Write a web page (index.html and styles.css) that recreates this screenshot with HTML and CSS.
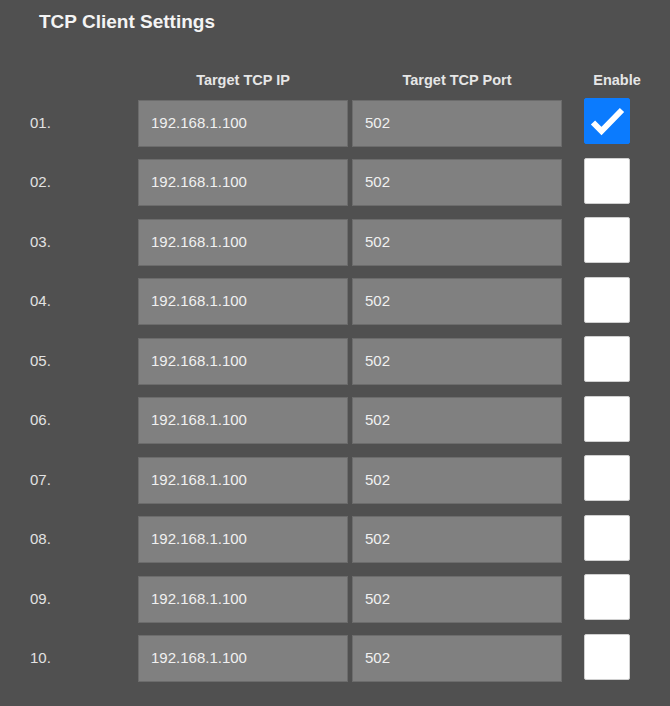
FILE: index.html
```html
<!DOCTYPE html>
<html>
<head>
<meta charset="utf-8">
<link rel="stylesheet" href="styles.css">
</head>
<body>
<div class="panel">
  <h1 class="title">TCP Client Settings</h1>
  <div class="grid">
    <div class="head"></div>
    <div class="head head-ip">Target TCP IP</div>
    <div class="head head-port">Target TCP Port</div>
    <div class="head head-enable">Enable</div>

    <div class="label">01.</div><div class="field field-ip">192.168.1.100</div><div class="field field-port">502</div><div class="cell-check"><span class="check checked"><svg viewBox="0 0 46 46" width="46" height="46"><path d="M9 24.5 L17.5 33 L38 12" fill="none" stroke="#fff" stroke-width="6" stroke-linecap="butt" stroke-linejoin="miter"/></svg></span></div>
    <div class="label">02.</div><div class="field field-ip">192.168.1.100</div><div class="field field-port">502</div><div class="cell-check"><span class="check"></span></div>
    <div class="label">03.</div><div class="field field-ip">192.168.1.100</div><div class="field field-port">502</div><div class="cell-check"><span class="check"></span></div>
    <div class="label">04.</div><div class="field field-ip">192.168.1.100</div><div class="field field-port">502</div><div class="cell-check"><span class="check"></span></div>
    <div class="label">05.</div><div class="field field-ip">192.168.1.100</div><div class="field field-port">502</div><div class="cell-check"><span class="check"></span></div>
    <div class="label">06.</div><div class="field field-ip">192.168.1.100</div><div class="field field-port">502</div><div class="cell-check"><span class="check"></span></div>
    <div class="label">07.</div><div class="field field-ip">192.168.1.100</div><div class="field field-port">502</div><div class="cell-check"><span class="check"></span></div>
    <div class="label">08.</div><div class="field field-ip">192.168.1.100</div><div class="field field-port">502</div><div class="cell-check"><span class="check"></span></div>
    <div class="label">09.</div><div class="field field-ip">192.168.1.100</div><div class="field field-port">502</div><div class="cell-check"><span class="check"></span></div>
    <div class="label">10.</div><div class="field field-ip">192.168.1.100</div><div class="field field-port">502</div><div class="cell-check"><span class="check"></span></div>
  </div>
</div>
</body>
</html>
```
FILE: styles.css
```css
html, body {
  margin: 0;
  padding: 0;
  background: #505050;
  font-family: "Liberation Sans", Arial, sans-serif;
}
.panel {
  width: 670px;
  height: 706px;
  box-sizing: border-box;
  padding: 11px 0 0 30px;
}
.title {
  margin: 0 0 0 9px;
  font-size: 19px;
  line-height: 22px;
  font-weight: bold;
  color: #f4f4f4;
}
.grid {
  margin-top: 38px;
  display: grid;
  grid-template-columns: 108px 214px 210px 90px;
  grid-template-rows: 16px;
  grid-auto-rows: 47px;
  row-gap: 12.55px;
}
.grid .head {
  font-size: 14.5px;
  line-height: 16px;
  font-weight: bold;
  color: #e6e6e6;
  text-align: center;
  margin-top: 1px;
  margin-bottom: -3.5px;
}
.head-ip { width: 210px; }
.head-port { width: 210px; }
.head-enable {
  padding-left: 22px;
  width: 66px;
}
.label {
  font-size: 15px;
  color: #e2e2e2;
  display: flex;
  align-items: center;
  padding-bottom: 2px;
}
.field {
  box-sizing: border-box;
  width: 210px;
  height: 47px;
  background: #808080;
  border: 1px solid #6c6c6c;
  color: #f0f0f0;
  font-size: 15px;
  padding-left: 12px;
  padding-bottom: 2px;
  display: flex;
  align-items: center;
}
.cell-check {
  padding-left: 22px;
}
.check {
  display: block;
  box-sizing: border-box;
  width: 46px;
  height: 46px;
  margin-top: -1.5px;
  background: #fff;
  border: 1px solid #d0d0d0;
  border-radius: 2px;
}
.check.checked {
  background: #0b7bfe;
  border-color: #0b7bfe;
  margin-left: -0.5px;
  overflow: hidden;
}
.check svg {
  display: block;
  margin: -1px;
}
```
